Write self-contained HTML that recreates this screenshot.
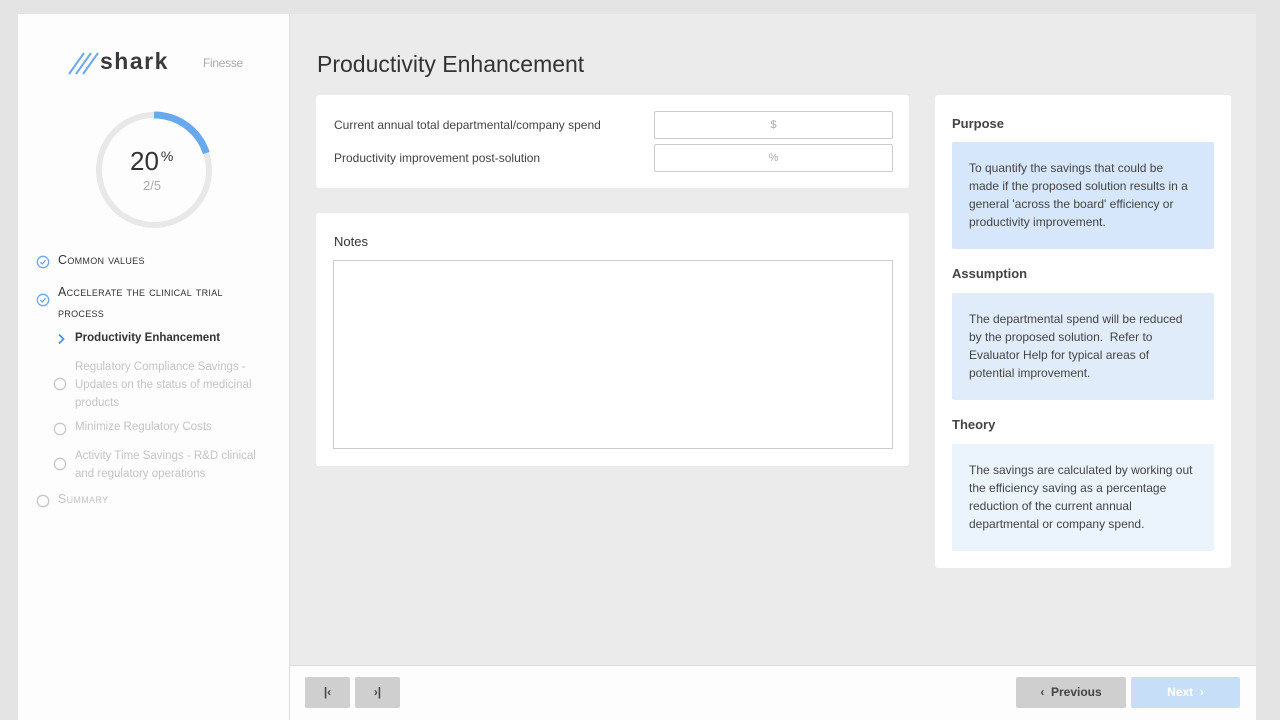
<!DOCTYPE html>
<html><head><style>
*{box-sizing:border-box;margin:0;padding:0}
body{width:1280px;height:720px;background:#e4e4e4;font-family:"Liberation Sans",sans-serif;position:relative;overflow:hidden;color:#333}
.a{position:absolute}
.side{left:18px;top:14px;width:272px;height:706px;background:#fdfdfd;border-right:1px solid #ddd}
.main{left:290px;top:14px;width:966px;height:651px;background:#ebebeb}
.foot{left:290px;top:665px;width:966px;height:55px;background:#fdfdfd;border-top:1px solid #ddd}
.card{background:#fff;border-radius:3px}
.lbl{font-size:12px;color:#444}
.inp{background:#fff;border:1px solid #ccc;border-radius:2px;font-size:11px;color:#aaa;text-align:center;line-height:26px}
.h{font-size:13px;font-weight:bold;color:#444}
.box{font-size:12px;line-height:18px;color:#444;padding:17px 20px 17px 17px;border-radius:2px}
.nav{font-size:11.5px}
.sc{font-variant:small-caps;font-size:12.5px;color:#333;letter-spacing:.3px}
.btn{background:#cfcfcf;border-radius:2px;color:#444;font-weight:bold;font-size:12px;text-align:center;line-height:30px}
</style></head><body>
<div class="a side"></div>
<div class="a main"></div>
<div class="a foot"></div>

<svg class="a" style="left:66px;top:50px" width="36" height="26"><g stroke="#6aa9ee" stroke-width="2"><line x1="3" y1="24" x2="18" y2="3"/><line x1="10" y1="24" x2="25" y2="3"/><line x1="17" y1="24" x2="32" y2="3"/></g></svg>
<div class="a" style="left:100px;top:49px;font-size:23px;line-height:24px;font-weight:bold;color:#3a3a3a;letter-spacing:1.5px">shark</div>
<div class="a" style="left:203px;top:56px;font-size:12px;color:#aaa;letter-spacing:-0.3px">Finesse</div>

<svg class="a" style="left:92px;top:108px" width="124" height="124"><circle cx="62" cy="62" r="55" fill="none" stroke="#e8e8e8" stroke-width="6"/><path d="M62 7 A55 55 0 0 1 114.3 45" fill="none" stroke="#68a8ee" stroke-width="7"/></svg>
<div class="a" style="left:130px;top:146px;font-size:26px;color:#333">20<span style="font-size:14px;vertical-align:top;position:relative;top:2px;margin-left:2px">%</span></div>
<div class="a" style="left:143px;top:178px;font-size:13px;color:#aaa">2/5</div>

<svg class="a" style="left:36px;top:255px" width="14" height="14"><circle cx="7" cy="7" r="5.7" fill="none" stroke="#68a8ee" stroke-width="1.3"/><path d="M4.3 7.2 L6.3 9 L9.6 5.2" fill="none" stroke="#68a8ee" stroke-width="1.3"/></svg>
<div class="a sc" style="left:58px;top:253px">Common values</div>
<svg class="a" style="left:36px;top:293px" width="14" height="14"><circle cx="7" cy="7" r="5.7" fill="none" stroke="#68a8ee" stroke-width="1.3"/><path d="M4.3 7.2 L6.3 9 L9.6 5.2" fill="none" stroke="#68a8ee" stroke-width="1.3"/></svg>
<div class="a sc" style="left:58px;top:282px;width:200px;line-height:21px">Accelerate the clinical trial process</div>
<svg class="a" style="left:56px;top:333px" width="10" height="12"><path d="M3 1.5 L7.5 6 L3 10.5" fill="none" stroke="#4a90e2" stroke-width="1.8"/></svg>
<div class="a nav" style="left:75px;top:332px;font-weight:bold;color:#333">Productivity Enhancement</div>
<div class="a nav" style="left:75px;top:358px;width:195px;line-height:18px;color:#c4c4c4">Regulatory Compliance Savings - Updates on the status of medicinal products</div>
<div class="a nav" style="left:75px;top:421px;color:#c4c4c4">Minimize Regulatory Costs</div>
<div class="a nav" style="left:75px;top:447px;width:195px;line-height:18px;color:#c4c4c4">Activity Time Savings - R&amp;D clinical and regulatory operations</div>
<svg class="a" style="left:53px;top:377px" width="14" height="14"><circle cx="7" cy="7" r="5.7" fill="none" stroke="#c8c8c8" stroke-width="1.3"/></svg>
<svg class="a" style="left:53px;top:422px" width="14" height="14"><circle cx="7" cy="7" r="5.7" fill="none" stroke="#c8c8c8" stroke-width="1.3"/></svg>
<svg class="a" style="left:53px;top:457px" width="14" height="14"><circle cx="7" cy="7" r="5.7" fill="none" stroke="#c8c8c8" stroke-width="1.3"/></svg>
<svg class="a" style="left:36px;top:494px" width="14" height="14"><circle cx="7" cy="7" r="5.7" fill="none" stroke="#c8c8c8" stroke-width="1.3"/></svg>
<div class="a sc" style="left:58px;top:492px;color:#c4c4c4">Summary</div>

<div class="a" style="left:317px;top:51px;font-size:23px;color:#333">Productivity Enhancement</div>
<div class="a card" style="left:316px;top:95px;width:593px;height:93px"></div>
<div class="a lbl" style="left:334px;top:118px">Current annual total departmental/company spend</div>
<div class="a lbl" style="left:334px;top:151px">Productivity improvement post-solution</div>
<div class="a inp" style="left:654px;top:111px;width:239px;height:28px">$</div>
<div class="a inp" style="left:654px;top:144px;width:239px;height:28px">%</div>

<div class="a card" style="left:316px;top:213px;width:593px;height:253px"></div>
<div class="a h" style="left:334px;top:234px;font-weight:normal;color:#333">Notes</div>
<div class="a" style="left:333px;top:260px;width:560px;height:189px;border:1px solid #ccc;background:#fff"></div>

<div class="a card" style="left:935px;top:95px;width:296px;height:473px"></div>
<div class="a h" style="left:952px;top:116px">Purpose</div>
<div class="a box" style="left:952px;top:142px;width:262px;height:107px;background:#d6e6fb">To quantify the savings that could be made if the proposed solution results in a general 'across the board' efficiency or productivity improvement.</div>
<div class="a h" style="left:952px;top:266px">Assumption</div>
<div class="a box" style="left:952px;top:293px;width:262px;height:107px;background:#e1ecfb">The departmental spend will be reduced by the proposed solution.&nbsp; Refer to Evaluator Help for typical areas of potential improvement.</div>
<div class="a h" style="left:952px;top:417px">Theory</div>
<div class="a box" style="left:952px;top:444px;width:262px;height:107px;background:#ebf3fc">The savings are calculated by working out the efficiency saving as a percentage reduction of the current annual departmental or company spend.</div>

<div class="a btn" style="left:305px;top:677px;width:45px;height:31px">|&lsaquo;</div>
<div class="a btn" style="left:355px;top:677px;width:45px;height:31px">&rsaquo;|</div>
<div class="a btn" style="left:1016px;top:677px;width:110px;height:31px">&lsaquo;&nbsp; Previous</div>
<div class="a btn" style="left:1131px;top:677px;width:109px;height:31px;background:#c7def9;color:#fff">Next &nbsp;&rsaquo;</div>
</body></html>
